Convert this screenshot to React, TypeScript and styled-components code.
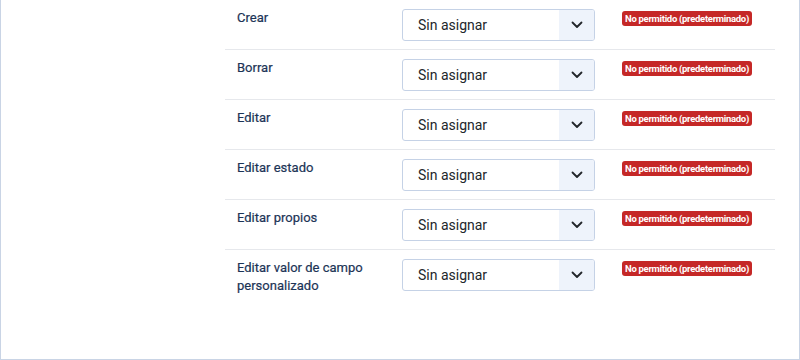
import styled, { createGlobalStyle } from "styled-components";

const GlobalStyle = createGlobalStyle`
  body {
    margin: 0;
    background: #ffffff;
    font-family: Roboto, "Liberation Sans", sans-serif;
  }
`;

const Card = styled.div`
  box-sizing: border-box;
  width: 800px;
  height: 360px;
  border: 1px solid #c9d4e5;
  border-top: none;
  background: #ffffff;
  padding: 0 24px 0 224px;
`;

const Table = styled.div`
  display: flex;
  flex-direction: column;
`;

const Row = styled.div<{ $last?: boolean }>`
  display: grid;
  grid-template-columns: 177px 193px 1fr;
  align-items: start;
  height: 50px;
  box-sizing: border-box;
  padding-top: 9px;
  border-bottom: ${(p) => (p.$last ? "none" : "1px solid #e6e8ec")};
`;

const Label = styled.div`
  padding: 0 12px;
  font-size: 13px;
  line-height: 18px;
  color: #1c3456;
  max-width: 130px;
  -webkit-text-stroke: 0.2px #1c3456;
`;

const Select = styled.div`
  display: flex;
  height: 32px;
  box-sizing: border-box;
  border: 1px solid #c5d2e6;
  border-radius: 3px;
  overflow: hidden;
`;

const SelectText = styled.div`
  flex: 1;
  display: flex;
  align-items: center;
  padding-left: 15px;
  font-size: 14px;
  color: #22262a;
`;

const Arrow = styled.div`
  width: 35px;
  display: flex;
  align-items: center;
  justify-content: center;
  background: #eef3fb;
`;

const Badge = styled.span`
  justify-self: start;
  margin-left: 27px;
  margin-top: 2px;
  background: #c52827;
  color: #ffffff;
  font-size: 9.5px;
  letter-spacing: -0.3px;
  font-weight: 700;
  line-height: 15px;
  padding: 0 3px;
  border-radius: 3px;
  white-space: nowrap;
`;

const actions = [
  "Crear",
  "Borrar",
  "Editar",
  "Editar estado",
  "Editar propios",
  "Editar valor de campo personalizado",
];

const Chevron = () => (
  <svg width="12" height="8" viewBox="0 0 12 8">
    <path d="M1.5 1.5 L6 6 L10.5 1.5" fill="none" stroke="#22262a" strokeWidth="1.8" strokeLinecap="round" strokeLinejoin="round" />
  </svg>
);

export default function App() {
  return (
    <>
      <GlobalStyle />
      <Card>
        <Table>
          {actions.map((a, i) => (
            <Row key={a} $last={i === actions.length - 1}>
              <Label>{a}</Label>
              <Select>
                <SelectText>Sin asignar</SelectText>
                <Arrow>
                  <Chevron />
                </Arrow>
              </Select>
              <Badge>No permitido (predeterminado)</Badge>
            </Row>
          ))}
        </Table>
      </Card>
    </>
  );
}
